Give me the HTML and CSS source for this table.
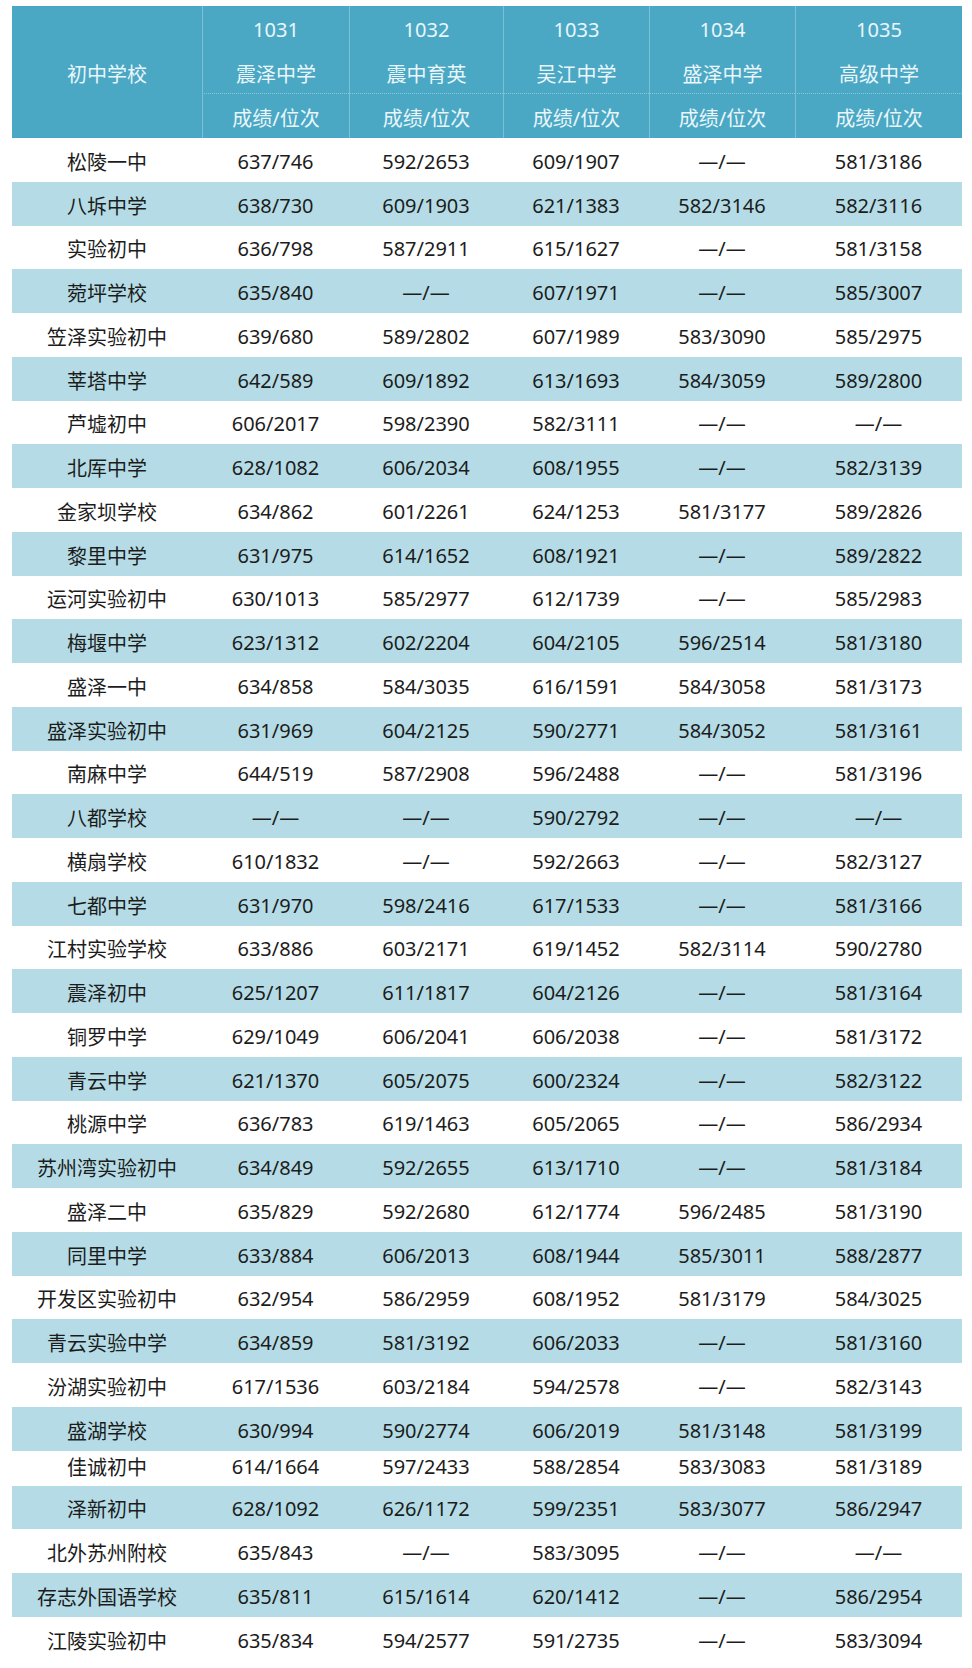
FILE: index.html
```html
<!DOCTYPE html>
<html lang="zh-CN">
<head>
<meta charset="utf-8">
<title>初中学校 成绩/位次</title>
<link rel="stylesheet" href="styles.css">
</head>
<body>
<div class="sheet" role="table">
  <div class="head" role="rowgroup">
    <div class="hcell corner" role="columnheader">初中学校</div>
    <div class="hcell code">1031</div>
    <div class="hcell code">1032</div>
    <div class="hcell code">1033</div>
    <div class="hcell code">1034</div>
    <div class="hcell code">1035</div>
    <div class="hcell name">震泽中学</div>
    <div class="hcell name">震中育英</div>
    <div class="hcell name">吴江中学</div>
    <div class="hcell name">盛泽中学</div>
    <div class="hcell name">高级中学</div>
    <div class="hcell sub">成绩/位次</div>
    <div class="hcell sub">成绩/位次</div>
    <div class="hcell sub">成绩/位次</div>
    <div class="hcell sub">成绩/位次</div>
    <div class="hcell sub">成绩/位次</div>
  </div>
  <div class="body" role="rowgroup">
    <div class="row"><span>松陵一中</span><span>637/746</span><span>592/2653</span><span>609/1907</span><span>—/—</span><span>581/3186</span></div>
    <div class="row alt"><span>八坼中学</span><span>638/730</span><span>609/1903</span><span>621/1383</span><span>582/3146</span><span>582/3116</span></div>
    <div class="row"><span>实验初中</span><span>636/798</span><span>587/2911</span><span>615/1627</span><span>—/—</span><span>581/3158</span></div>
    <div class="row alt"><span>菀坪学校</span><span>635/840</span><span>—/—</span><span>607/1971</span><span>—/—</span><span>585/3007</span></div>
    <div class="row"><span>笠泽实验初中</span><span>639/680</span><span>589/2802</span><span>607/1989</span><span>583/3090</span><span>585/2975</span></div>
    <div class="row alt"><span>莘塔中学</span><span>642/589</span><span>609/1892</span><span>613/1693</span><span>584/3059</span><span>589/2800</span></div>
    <div class="row"><span>芦墟初中</span><span>606/2017</span><span>598/2390</span><span>582/3111</span><span>—/—</span><span>—/—</span></div>
    <div class="row alt"><span>北厍中学</span><span>628/1082</span><span>606/2034</span><span>608/1955</span><span>—/—</span><span>582/3139</span></div>
    <div class="row"><span>金家坝学校</span><span>634/862</span><span>601/2261</span><span>624/1253</span><span>581/3177</span><span>589/2826</span></div>
    <div class="row alt"><span>黎里中学</span><span>631/975</span><span>614/1652</span><span>608/1921</span><span>—/—</span><span>589/2822</span></div>
    <div class="row"><span>运河实验初中</span><span>630/1013</span><span>585/2977</span><span>612/1739</span><span>—/—</span><span>585/2983</span></div>
    <div class="row alt"><span>梅堰中学</span><span>623/1312</span><span>602/2204</span><span>604/2105</span><span>596/2514</span><span>581/3180</span></div>
    <div class="row"><span>盛泽一中</span><span>634/858</span><span>584/3035</span><span>616/1591</span><span>584/3058</span><span>581/3173</span></div>
    <div class="row alt"><span>盛泽实验初中</span><span>631/969</span><span>604/2125</span><span>590/2771</span><span>584/3052</span><span>581/3161</span></div>
    <div class="row"><span>南麻中学</span><span>644/519</span><span>587/2908</span><span>596/2488</span><span>—/—</span><span>581/3196</span></div>
    <div class="row alt"><span>八都学校</span><span>—/—</span><span>—/—</span><span>590/2792</span><span>—/—</span><span>—/—</span></div>
    <div class="row"><span>横扇学校</span><span>610/1832</span><span>—/—</span><span>592/2663</span><span>—/—</span><span>582/3127</span></div>
    <div class="row alt"><span>七都中学</span><span>631/970</span><span>598/2416</span><span>617/1533</span><span>—/—</span><span>581/3166</span></div>
    <div class="row"><span>江村实验学校</span><span>633/886</span><span>603/2171</span><span>619/1452</span><span>582/3114</span><span>590/2780</span></div>
    <div class="row alt"><span>震泽初中</span><span>625/1207</span><span>611/1817</span><span>604/2126</span><span>—/—</span><span>581/3164</span></div>
    <div class="row"><span>铜罗中学</span><span>629/1049</span><span>606/2041</span><span>606/2038</span><span>—/—</span><span>581/3172</span></div>
    <div class="row alt"><span>青云中学</span><span>621/1370</span><span>605/2075</span><span>600/2324</span><span>—/—</span><span>582/3122</span></div>
    <div class="row"><span>桃源中学</span><span>636/783</span><span>619/1463</span><span>605/2065</span><span>—/—</span><span>586/2934</span></div>
    <div class="row alt"><span>苏州湾实验初中</span><span>634/849</span><span>592/2655</span><span>613/1710</span><span>—/—</span><span>581/3184</span></div>
    <div class="row"><span>盛泽二中</span><span>635/829</span><span>592/2680</span><span>612/1774</span><span>596/2485</span><span>581/3190</span></div>
    <div class="row alt"><span>同里中学</span><span>633/884</span><span>606/2013</span><span>608/1944</span><span>585/3011</span><span>588/2877</span></div>
    <div class="row"><span>开发区实验初中</span><span>632/954</span><span>586/2959</span><span>608/1952</span><span>581/3179</span><span>584/3025</span></div>
    <div class="row alt"><span>青云实验中学</span><span>634/859</span><span>581/3192</span><span>606/2033</span><span>—/—</span><span>581/3160</span></div>
    <div class="row"><span>汾湖实验初中</span><span>617/1536</span><span>603/2184</span><span>594/2578</span><span>—/—</span><span>582/3143</span></div>
    <div class="row alt"><span>盛湖学校</span><span>630/994</span><span>590/2774</span><span>606/2019</span><span>581/3148</span><span>581/3199</span></div>
    <div class="row short"><span>佳诚初中</span><span>614/1664</span><span>597/2433</span><span>588/2854</span><span>583/3083</span><span>581/3189</span></div>
    <div class="row alt"><span>泽新初中</span><span>628/1092</span><span>626/1172</span><span>599/2351</span><span>583/3077</span><span>586/2947</span></div>
    <div class="row"><span>北外苏州附校</span><span>635/843</span><span>—/—</span><span>583/3095</span><span>—/—</span><span>—/—</span></div>
    <div class="row alt"><span>存志外国语学校</span><span>635/811</span><span>615/1614</span><span>620/1412</span><span>—/—</span><span>586/2954</span></div>
    <div class="row"><span>江陵实验初中</span><span>635/834</span><span>594/2577</span><span>591/2735</span><span>—/—</span><span>583/3094</span></div>
  </div>
</div>
</body>
</html>
```
FILE: styles.css
```css
* {
  box-sizing: border-box;
}

html,
body {
  background: #ffffff;
}

body {
  margin: 6px 10px 0 12px;
  font-family: "Noto Sans", "Noto Sans CJK SC", "DejaVu Sans", sans-serif;
  font-size: 20px;
  color: #1c1c1c;
}

.sheet {
  width: 950px;
}

.head {
  display: grid;
  grid-template-columns: 190px 147px 154px 146px 146px 167px;
  grid-template-rows: 44px 44px 44px;
  background: #4aa8c5;
  color: #eaf6fa;
}

.hcell {
  display: flex;
  align-items: center;
  justify-content: center;
  padding-top: 3px;
  border-left: 1px solid rgba(255, 255, 255, 0.28);
  white-space: nowrap;
}

.hcell.corner {
  grid-row: 1 / span 3;
  border-left: none;
}

.hcell.name {
  border-bottom: 1px dotted rgba(255, 255, 255, 0.35);
}

.row {
  display: grid;
  grid-template-columns: 190px 147px 154px 146px 146px 167px;
  height: 43.76px;
  align-items: center;
  padding-top: 3px;
  white-space: nowrap;
}

.row span {
  text-align: center;
}

.row.alt {
  background: #b5dce6;
}

.row.short {
  height: 35px;
  padding-top: 0;
  padding-bottom: 4px;
}
```
